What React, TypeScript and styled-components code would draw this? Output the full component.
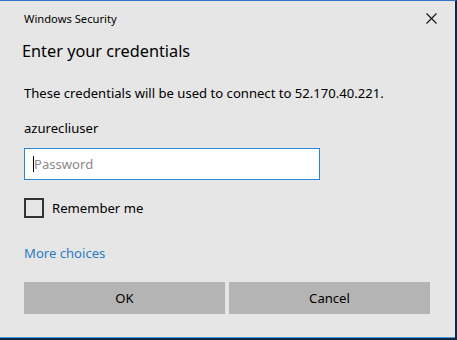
import React from 'react';
import styled, { createGlobalStyle } from 'styled-components';

const GlobalStyle = createGlobalStyle`
  html, body {
    margin: 0;
    padding: 0;
    background: #e6e6e6;
  }
  * {
    box-sizing: border-box;
  }
`;

export default function App() {
  return (
    <>
      <GlobalStyle />
      <Window>
        <TitleBar>
          <TitleText>Windows Security</TitleText>
          <CloseButton aria-label="Close">
            <svg width="11" height="11" viewBox="0 0 11 11">
              <path d="M0.5 0.5L10.5 10.5M10.5 0.5L0.5 10.5" stroke="#111" strokeWidth="1.1" />
            </svg>
          </CloseButton>
        </TitleBar>
        <Heading>Enter your credentials</Heading>
        <Body>
          <Message>These credentials will be used to connect to 52.170.40.221.</Message>
          <UserName>azurecliuser</UserName>
          <PasswordField>
            <Caret />
            <Placeholder>Password</Placeholder>
          </PasswordField>
          <CheckRow>
            <CheckBox />
            <CheckLabel>Remember me</CheckLabel>
          </CheckRow>
          <MoreLink href="#">More choices</MoreLink>
          <Buttons>
            <Button>OK</Button>
            <Button>Cancel</Button>
          </Buttons>
        </Body>
      </Window>
    </>
  );
}

const Window = styled.div`
  width: 457px;
  height: 340px;
  display: flex;
  flex-direction: column;
  background: #e6e6e6;
  border-top: 1px solid #2b79c2;
  border-right: 2px solid #0e2848;
  border-bottom: 2px solid #0e2848;
  box-shadow: inset 0 -1px 0 #4d9ad6;
  font-family: 'Noto Sans', 'Open Sans', sans-serif;
  color: #000;
`;

const TitleBar = styled.div`
  display: flex;
  align-items: center;
  justify-content: space-between;
  height: 34px;
  padding: 0 18px 0 24px;
`;

const TitleText = styled.span`
  font-size: 11.2px;
`;

const CloseButton = styled.span`
  display: flex;
  width: 11px;
  height: 11px;
`;

const Heading = styled.h1`
  margin: 3px 0 0 22px;
  font-size: 16.3px;
  font-weight: 400;
  line-height: 26px;
`;

const Body = styled.div`
  display: flex;
  flex-direction: column;
  padding: 0 0 0 24px;
`;

const Message = styled.p`
  margin: 19px 0 0;
  font-size: 13.1px;
  line-height: 20px;
`;

const UserName = styled.p`
  margin: 15px 0 0;
  font-size: 13.1px;
  line-height: 20px;
`;

const PasswordField = styled.div`
  margin-top: 10px;
  width: 296px;
  height: 32px;
  background: #fff;
  border: 1px solid #2f86d2;
  display: flex;
  align-items: center;
  padding-left: 8px;
`;

const Caret = styled.span`
  width: 1px;
  height: 16px;
  background: #000;
`;

const Placeholder = styled.span`
  font-size: 13.1px;
  color: #8a8a8a;
`;

const CheckRow = styled.div`
  display: flex;
  align-items: center;
  gap: 8px;
  margin-top: 18px;
`;

const CheckBox = styled.span`
  width: 20px;
  height: 20px;
  border: 2px solid #333;
`;

const CheckLabel = styled.span`
  font-size: 13.1px;
`;

const MoreLink = styled.a`
  margin-top: 25px;
  font-size: 13.1px;
  line-height: 20px;
  color: #2b7cc4;
  text-decoration: none;
  align-self: flex-start;
`;

const Buttons = styled.div`
  display: grid;
  grid-template-columns: 201px 201px;
  gap: 4px;
  margin-top: 19px;
`;

const Button = styled.button`
  height: 32px;
  border: none;
  background: #b4b4b4;
  font-family: inherit;
  font-size: 13.1px;
  color: #000;
  padding: 0;
`;
